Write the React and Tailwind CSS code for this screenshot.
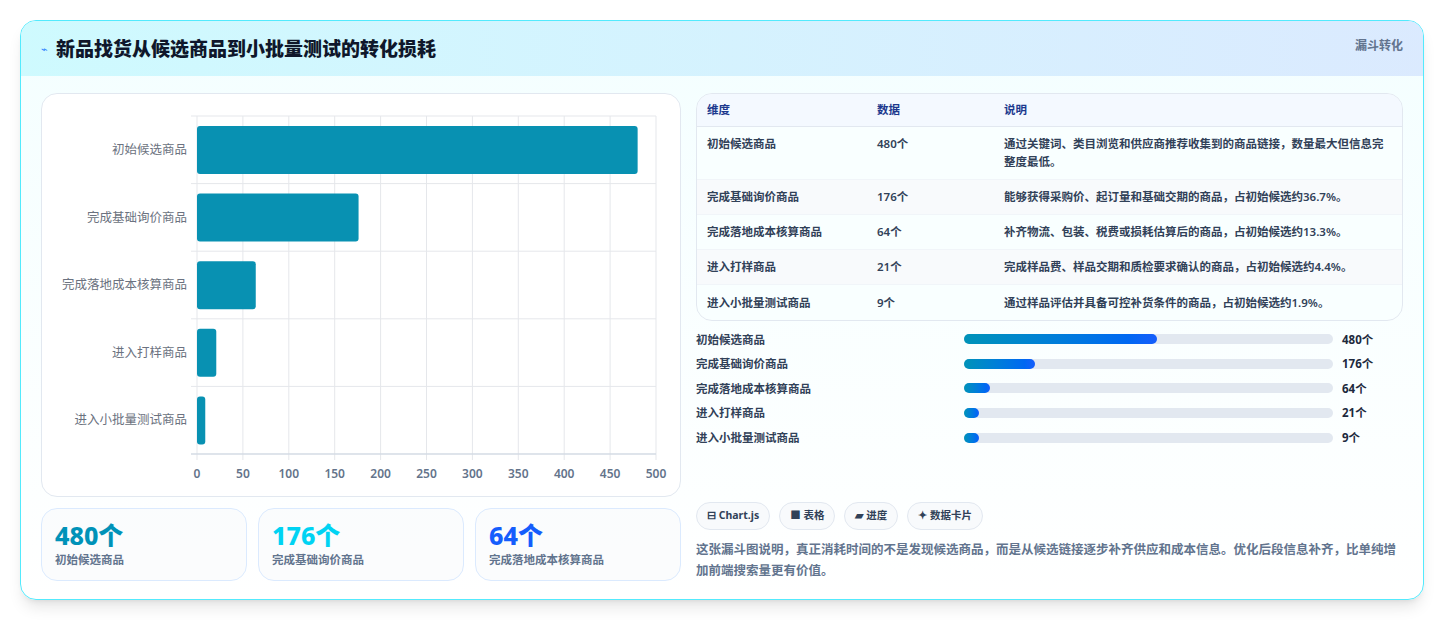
import React from "react";

const rows = [
  ["初始候选商品", 480, "通过关键词、类目浏览和供应商推荐收集到的商品链接，数量最大但信息完整度最低。"],
  ["完成基础询价商品", 176, "能够获得采购价、起订量和基础交期的商品，占初始候选约36.7%。"],
  ["完成落地成本核算商品", 64, "补齐物流、包装、税费或损耗估算后的商品，占初始候选约13.3%。"],
  ["进入打样商品", 21, "完成样品费、样品交期和质检要求确认的商品，占初始候选约4.4%。"],
  ["进入小批量测试商品", 9, "通过样品评估并具备可控补货条件的商品，占初始候选约1.9%。"],
];
const font = { fontFamily: '"Noto Sans", "Noto Sans CJK SC", sans-serif' };

function Chart() {
  const x0 = 155, w = 459, top = 22, h = 338, rowH = h / 5;
  const ticks = [0, 50, 100, 150, 200, 250, 300, 350, 400, 450, 500];
  return (
    <svg width="640" height="404" className="block">
      {ticks.map((t) => (
        <line key={t} x1={x0 + (t / 500) * w} x2={x0 + (t / 500) * w} y1={top} y2={top + h + 6} stroke="#e5e7eb" />
      ))}
      {[0, 1, 2, 3, 4, 5].map((i) => (
        <line key={i} x1={x0 - 6} x2={x0 + w} y1={top + i * rowH} y2={top + i * rowH} stroke="#e5e7eb" />
      ))}
      <line x1={x0 - 6} x2={x0 + w} y1={top + h} y2={top + h} stroke="#cbd5e1" />
      {rows.map(([n, v], i) => (
        <g key={n}>
          <rect x={x0} y={top + i * rowH + 10} width={(v / 500) * w} height={48} rx="3" fill="#0891b2" />
          <text x={x0 - 10} y={top + i * rowH + 38} textAnchor="end" fontSize="12.5" fill="#6b7280">{n}</text>
        </g>
      ))}
      {ticks.map((t) => (
        <text key={t} x={x0 + (t / 500) * w} y={top + h + 24} textAnchor="middle" fontSize="12" fill="#64748b" fontWeight="600">{t}</text>
      ))}
    </svg>
  );
}

export default function App() {
  return (
    <div className="w-[1444px] h-[620px] bg-white p-5" style={font}>
      <div className="rounded-2xl border border-cyan-300 overflow-hidden shadow-lg bg-gradient-to-b from-cyan-50/60 to-white h-[580px]">
        <div className="h-[55px] bg-gradient-to-r from-cyan-100 to-blue-100 flex items-start justify-between px-5">
          <div className="flex items-center gap-2 mt-[14px]">
            <span className="text-blue-500 text-[11px]">⌁</span>
            <span className="text-[19px] font-extrabold text-slate-900">新品找货从候选商品到小批量测试的转化损耗</span>
          </div>
          <span className="text-[12px] font-bold text-slate-500 mt-[16px]">漏斗转化</span>
        </div>
        <div className="flex gap-[15px] px-5 pt-[17px]">
          <div className="w-[640px] flex flex-col gap-[11px]">
            <div className="h-[404px] rounded-2xl border border-slate-200 bg-white"><Chart /></div>
            <div className="grid grid-cols-3 gap-[11px]">
              {[["480个", "text-cyan-600"], ["176个", "text-cyan-400"], ["64个", "text-blue-600"]].map(([v, c], i) => (
                <div key={v} className="h-[73px] rounded-2xl border border-blue-100 bg-slate-50/60 px-[13px] pt-[10px]">
                  <div className={`text-[25px] font-extrabold leading-[32px] ${c}`}>{v}</div>
                  <div className="text-[11.5px] font-semibold text-slate-500">{rows[i][0]}</div>
                </div>
              ))}
            </div>
          </div>
          <div className="w-[710px] flex flex-col">
            <div className="rounded-2xl border border-slate-200 overflow-hidden bg-white text-[11.5px] font-semibold text-slate-700">
              <div className="h-[33px] flex items-center bg-blue-50/70 text-blue-900 border-b border-slate-200">
                <div className="w-[180px] pl-[10px]">维度</div><div className="w-[127px]">数据</div><div>说明</div>
              </div>
              {rows.map(([n, v, d], i) => (
                <div key={n} className={`flex ${i === 0 ? "py-[8px] h-[53px]" : "h-[35px] items-center"} ${i % 2 ? "bg-slate-50" : "bg-cyan-50/30"} ${i < 4 ? "border-b border-slate-100" : ""}`}>
                  <div className="w-[180px] pl-[10px] leading-[18px]">{n}</div>
                  <div className="w-[127px] leading-[18px]">{v}个</div>
                  <div className="flex-1 pr-[14px] leading-[18px]">{d}</div>
                </div>
              ))}
            </div>
            <div className="mt-[6px] flex flex-col text-[11.5px] font-semibold text-slate-700">
              {rows.map(([n, v]) => (
                <div key={n} className="h-[24.6px] flex items-center">
                  <div className="w-[268px]">{n}</div>
                  <div className="w-[369px] h-[10px] rounded-full bg-slate-200">
                    <div className="h-full rounded-full bg-gradient-to-r from-cyan-600 to-blue-600" style={{ width: Math.max(15, (v / 480) * 193) + "px" }} />
                  </div>
                  <div className="ml-[9px] font-bold text-slate-800">{v}个</div>
                </div>
              ))}
            </div>
            <div className="flex gap-[9px] mt-[52px]">
              {["⊟ Chart.js", "■ 表格", "▰ 进度", "✦ 数据卡片"].map((t) => (
                <span key={t} className="h-[28px] px-[10px] rounded-full border border-slate-200 bg-slate-50 text-[10.5px] font-bold text-slate-700 flex items-center">{t}</span>
              ))}
            </div>
            <p className="mt-[9px] text-[12.5px] font-semibold text-slate-500 leading-[21px]">这张漏斗图说明，真正消耗时间的不是发现候选商品，而是从候选链接逐步补齐供应和成本信息。优化后段信息补齐，比单纯增加前端搜索量更有价值。</p>
          </div>
        </div>
      </div>
    </div>
  );
}
